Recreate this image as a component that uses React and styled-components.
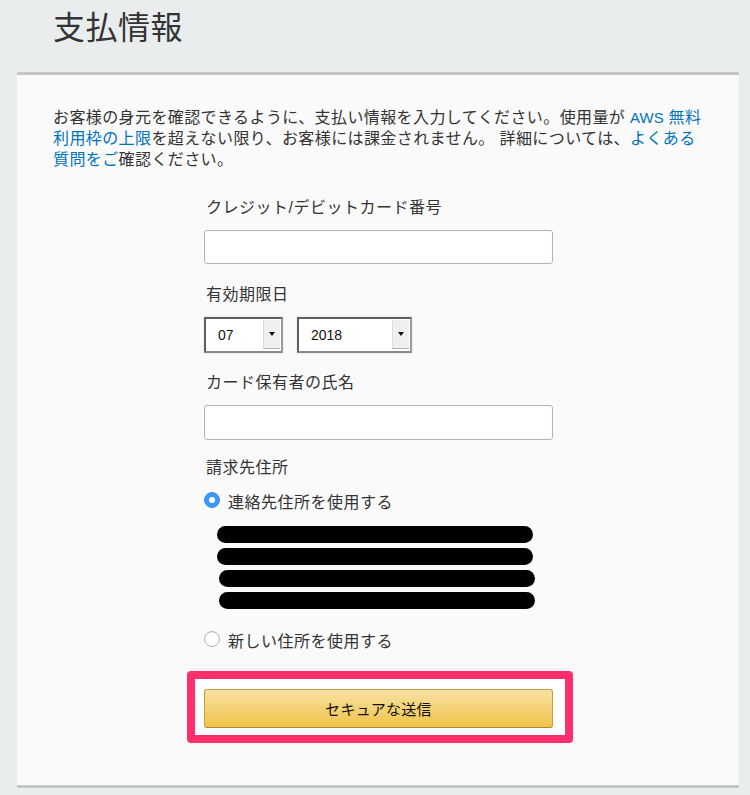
import React from "react";
import styled, { createGlobalStyle } from "styled-components";

const GlobalStyle = createGlobalStyle`
  html, body {
    margin: 0;
    padding: 0;
    background: #eaeded;
  }
  body {
    font-family: "Liberation Sans", "Noto Sans CJK JP", sans-serif;
    color: #333;
  }
`;

const Page = styled.div`
  width: 750px;
  min-height: 795px;
  background: #eaeded;
  overflow: hidden;
`;

const Header = styled.header`
  height: 72px;
  padding-left: 53px;
  h1 {
    margin: 0;
    padding-top: 9px;
    font-size: 32px;
    line-height: 38px;
    font-weight: 400;
    color: #333;
    letter-spacing: 0.5px;
  }
`;

const Panel = styled.section`
  margin-left: 17px;
  width: 722px;
  height: 716px;
  box-sizing: border-box;
  background: #fafafa;
  border-top: 3px solid #c5c6c6;
  border-bottom: 3px solid #c5c6c6;
  padding: 32px 36px 0 36px;
`;

const Intro = styled.p`
  margin: 0;
  font-size: 16px;
  line-height: 21px;
  letter-spacing: 0.4px;
  white-space: nowrap;
  color: #333;
  a {
    color: #0073bb;
    text-decoration: none;
  }
  .latin {
    letter-spacing: 0;
    font-size: 15px;
  }
`;

const Form = styled.form`
  margin-left: 151px;
  width: 349px;
  display: flex;
  flex-direction: column;
`;

const Label = styled.div`
  padding-left: 2px;
  font-size: 16px;
  line-height: 21px;
  letter-spacing: 0.5px;
  color: #333;
  margin-top: ${(p) => p.$top}px;
`;

const TextInput = styled.input`
  box-sizing: border-box;
  width: 349px;
  height: ${(p) => p.$h || 34}px;
  margin-top: 12px;
  border: 1px solid #aab7b8;
  border-radius: 3px;
  background: #fff;
  padding: 0 8px;
  font-size: 14px;
`;

const SelectRow = styled.div`
  display: flex;
  gap: 14px;
  margin-top: 12px;
`;

const Select = styled.div`
  box-sizing: border-box;
  width: ${(p) => p.$w}px;
  height: 36px;
  display: flex;
  align-items: stretch;
  background: #fff;
  border-style: solid;
  border-width: 2px;
  border-color: #5f5f5f #9a9a9a #8a8a8a #5f5f5f;
  box-shadow: 0 0 2px rgba(0, 0, 0, 0.12);
  font-size: 14px;
  color: #111;
`;

const SelectValue = styled.span`
  flex: 1;
  display: flex;
  align-items: center;
  padding-left: 12px;
`;

const SelectArrow = styled.span`
  width: 16px;
  margin: 1px 1px 2px 0;
  background: #efefef;
  border-left: 1px solid #dcdcdc;
  border-bottom: 1px solid #b5b5b5;
  display: flex;
  align-items: center;
  justify-content: center;
  &::after {
    content: "";
    border-left: 3.5px solid transparent;
    border-right: 3.5px solid transparent;
    border-top: 4px solid #111;
  }
`;

const RadioRow = styled.label`
  display: flex;
  align-items: center;
  gap: 8px;
  margin-top: ${(p) => p.$top}px;
  font-size: 16px;
  line-height: 21px;
  letter-spacing: 0.5px;
  color: #333;
`;

const RadioDot = styled.span`
  box-sizing: border-box;
  width: 16px;
  height: 16px;
  border-radius: 50%;
  flex: none;
  margin-top: -6px;
  background: ${(p) => (p.$on ? "#3b99fc" : "#fff")};
  border: 1px solid ${(p) => (p.$on ? "#3b8ef0" : "#b4b4b4")};
  box-shadow: ${(p) => (p.$on ? "none" : "inset 0 1px 1px rgba(0,0,0,0.08)")};
  display: flex;
  align-items: center;
  justify-content: center;
  &::after {
    content: "";
    width: 6px;
    height: 6px;
    border-radius: 50%;
    background: #fff;
    display: ${(p) => (p.$on ? "block" : "none")};
  }
`;

const Redacted = styled.div`
  display: flex;
  flex-direction: column;
  gap: 5px;
  margin-top: 13px;
`;

const Bar = styled.div`
  height: 17px;
  width: 316px;
  margin-left: ${(p) => p.$x}px;
  border-radius: 9px;
  background: #000;
`;

const Highlight = styled.div`
  margin-top: 19px;
  margin-left: -17px;
  width: 386px;
  box-sizing: border-box;
  border: 8px solid #fe2f6b;
  border-radius: 4px;
  background: #fff;
  padding: 10px 0 7px 9px;
`;

const SubmitButton = styled.button`
  width: 349px;
  height: 39px;
  border: 1px solid #c4a13c;
  border-bottom-color: #a88734;
  border-radius: 3px;
  background: linear-gradient(to bottom, #f8e2a4, #f0c248);
  font-family: inherit;
  font-size: 15px;
  color: #111;
  letter-spacing: 0.3px;
  cursor: pointer;
`;

export default function App() {
  return (
    <Page>
      <GlobalStyle />
      <Header>
        <h1>支払情報</h1>
      </Header>
      <Panel>
        <Intro>
          お客様の身元を確認できるように、支払い情報を入力してください。使用量が{" "}
          <a href="#">
            <span className="latin">AWS</span> 無料
            <br />
            利用枠の上限
          </a>
          を超えない限り、お客様には課金されません。 詳細については、
          <a href="#">
            よくある
            <br />
            質問をご
          </a>
          確認ください。
        </Intro>
        <Form>
          <Label $top={27}>クレジット/デビットカード番号</Label>
          <TextInput type="text" />
          <Label $top={20}>有効期限日</Label>
          <SelectRow>
            <Select $w={79}>
              <SelectValue>07</SelectValue>
              <SelectArrow />
            </Select>
            <Select $w={115}>
              <SelectValue>2018</SelectValue>
              <SelectArrow />
            </Select>
          </SelectRow>
          <Label $top={19}>カード保有者の氏名</Label>
          <TextInput type="text" $h={35} />
          <Label $top={17}>請求先住所</Label>
          <RadioRow $top={14}>
            <RadioDot $on />
            連絡先住所を使用する
          </RadioRow>
          <Redacted>
            <Bar $x={13} />
            <Bar $x={13} />
            <Bar $x={15} />
            <Bar $x={15} />
          </Redacted>
          <RadioRow $top={22}>
            <RadioDot />
            新しい住所を使用する
          </RadioRow>
          <Highlight>
            <SubmitButton type="button">セキュアな送信</SubmitButton>
          </Highlight>
        </Form>
      </Panel>
    </Page>
  );
}
